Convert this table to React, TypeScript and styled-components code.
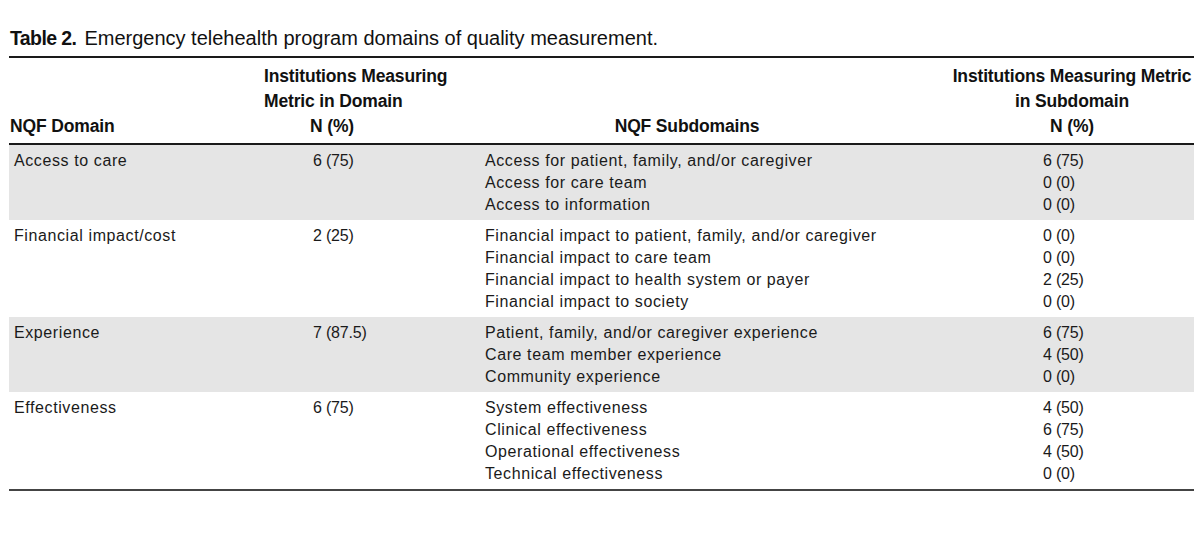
import styled, { createGlobalStyle } from 'styled-components'

const GlobalStyle = createGlobalStyle`
  html, body {
    margin: 0;
    padding: 0;
    background: #ffffff;
  }
  body {
    font-family: "Liberation Sans", Arial, sans-serif;
    color: #1a1a1a;
  }
`

const Page = styled.div`
  padding: 27px 6px 0 9px;
  width: 1185px;
`

const Caption = styled.div`
  font-size: 20px;
  line-height: 22px;
  padding-left: 1px;
  padding-bottom: 7px;
  color: #111;
`

const CaptionLabel = styled.span`
  font-weight: 700;
  font-size: 19.5px;
  letter-spacing: -0.6px;
  margin-right: 8px;
`

const Table = styled.div`
  border-top: 2px solid #1a1a1a;
  border-bottom: 2px solid #444;
`

const Grid = styled.div`
  display: grid;
  grid-template-columns: 255px 136px 550px 244px;
`

const HeadRow = styled(Grid)`
  border-bottom: 2px solid #1a1a1a;
  padding: 6px 0 4px;
  align-items: end;
`

const HeadCell = styled.div<{ $align?: 'left' | 'center'; $shift?: number }>`
  font-weight: 700;
  font-size: 17.5px;
  line-height: 25px;
  letter-spacing: -0.15px;
  color: #111;
  text-align: ${({ $align }) => $align ?? 'center'};
  padding-left: ${({ $shift }) => $shift ?? 0}px;
`

const BodyRow = styled(Grid)<{ $shaded?: boolean }>`
  background: ${({ $shaded }) => ($shaded ? '#e5e5e5' : 'transparent')};
  padding: 5px 0 4px;
`

const Cell = styled.div<{ $indent: number; $numeric?: boolean }>`
  font-size: 16px;
  letter-spacing: ${({ $numeric }) => ($numeric ? '-0.2px' : '0.6px')};
  line-height: 22px;
  padding-left: ${({ $indent }) => $indent}px;
  color: #1a1a1a;
`

const Line = styled.div`
  white-space: nowrap;
`

type Group = {
  domain: string
  value: string
  subs: [string, string][]
}

const groups: Group[] = [
  {
    domain: 'Access to care',
    value: '6 (75)',
    subs: [
      ['Access for patient, family, and/or caregiver', '6 (75)'],
      ['Access for care team', '0 (0)'],
      ['Access to information', '0 (0)'],
    ],
  },
  {
    domain: 'Financial impact/cost',
    value: '2 (25)',
    subs: [
      ['Financial impact to patient, family, and/or caregiver', '0 (0)'],
      ['Financial impact to care team', '0 (0)'],
      ['Financial impact to health system or payer', '2 (25)'],
      ['Financial impact to society', '0 (0)'],
    ],
  },
  {
    domain: 'Experience',
    value: '7 (87.5)',
    subs: [
      ['Patient, family, and/or caregiver experience', '6 (75)'],
      ['Care team member experience', '4 (50)'],
      ['Community experience', '0 (0)'],
    ],
  },
  {
    domain: 'Effectiveness',
    value: '6 (75)',
    subs: [
      ['System effectiveness', '4 (50)'],
      ['Clinical effectiveness', '6 (75)'],
      ['Operational effectiveness', '4 (50)'],
      ['Technical effectiveness', '0 (0)'],
    ],
  },
]

export default function App() {
  return (
    <Page>
      <GlobalStyle />
      <Caption>
        <CaptionLabel>Table 2.</CaptionLabel>
        Emergency telehealth program domains of quality measurement.
      </Caption>

      <Table>
        <HeadRow>
          <HeadCell $align="left" $shift={1}>NQF Domain</HeadCell>
          <HeadCell>
            <Line>Institutions Measuring</Line>
            <Line>Metric in Domain</Line>
            <Line>N (%)</Line>
          </HeadCell>
          <HeadCell $shift={24}>NQF Subdomains</HeadCell>
          <HeadCell>
            <Line>Institutions Measuring Metric</Line>
            <Line>in Subdomain</Line>
            <Line>N (%)</Line>
          </HeadCell>
        </HeadRow>

        {groups.map((g, i) => (
          <BodyRow key={g.domain} $shaded={i % 2 === 0}>
            <Cell $indent={5}>{g.domain}</Cell>
            <Cell $indent={49} $numeric>{g.value}</Cell>
            <Cell $indent={85}>
              {g.subs.map(([name]) => (
                <Line key={name}>{name}</Line>
              ))}
            </Cell>
            <Cell $indent={93} $numeric>
              {g.subs.map(([name, n]) => (
                <Line key={name}>{n}</Line>
              ))}
            </Cell>
          </BodyRow>
        ))}
      </Table>
    </Page>
  )
}
